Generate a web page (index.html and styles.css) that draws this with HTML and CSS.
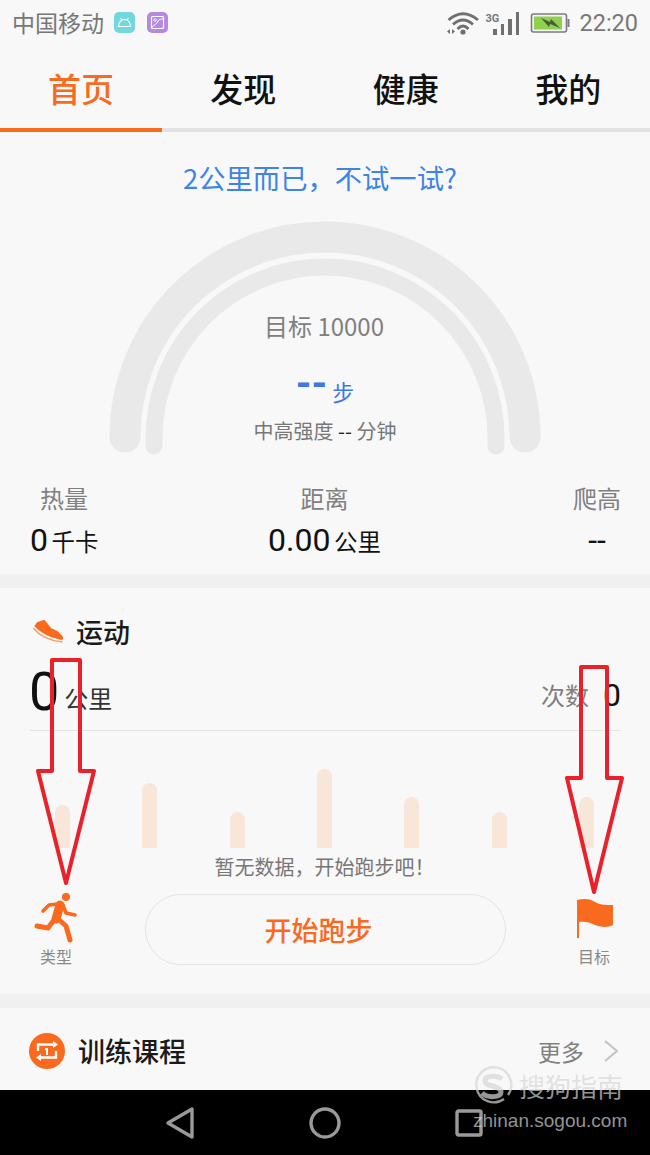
FILE: index.html
```html
<!DOCTYPE html>
<html lang="zh-CN">
<head>
    <meta charset="UTF-8">
    <meta name="viewport" content="width=device-width, initial-scale=1.0">
    <title>运动健康</title>
    <link rel="stylesheet" href="styles.css">
</head>
<body>
<div class="phone">

    <div class="status-bar">
        <div class="status-left">
            <span class="carrier">中国移动</span>
            <svg class="app-icon" viewBox="0 0 21 21">
                <rect width="21" height="21" rx="5" fill="#72d8de"/>
                <path d="M4.5 14.5 C5 10 7.5 7.5 10.5 7.5 C13.5 7.5 16 10 16.5 14.5 Z" fill="none" stroke="#fff" stroke-width="1.2"/>
                <path d="M6.5 6 L8 8 M14.5 6 L13 8" stroke="#fff" stroke-width="1"/>
            </svg>
            <svg class="app-icon" viewBox="0 0 21 21">
                <rect width="21" height="21" rx="5" fill="#b48ae0"/>
                <rect x="4.5" y="4.5" width="12" height="12" rx="1" fill="none" stroke="#fff" stroke-width="1.2"/>
                <path d="M5 15 C7 13 10 12 11 9 C12 7 14 7 16 7" fill="none" stroke="#fff" stroke-width="1"/>
                <circle cx="8" cy="8" r="1.3" fill="none" stroke="#fff" stroke-width="0.8"/>
            </svg>
        </div>
        <div class="status-right">
            <svg class="wifi" width="33" height="24" viewBox="0 0 33 24">
                <g fill="none" stroke="#707070" stroke-width="2.8">
                    <path d="M2.5 9 Q17 -3.5 32 9"/>
                    <path d="M7 13.5 Q17 4.5 27 13.5"/>
                    <path d="M11.5 18 Q17 12 22.5 18"/>
                </g>
                <circle cx="17" cy="21" r="2.6" fill="#707070"/>
                <path d="M4 18 L1 20.5 L4 23 Z M6 18 L9 20.5 L6 23 Z" fill="#707070"/>
            </svg>
            <span class="net-type">3G</span>
            <div class="signal">
                <span class="sig-1"></span>
                <span class="sig-2"></span>
                <span class="sig-3"></span>
                <span class="sig-4"></span>
            </div>
            <svg class="battery" width="41" height="20" viewBox="0 0 41 20">
                <rect x="1.5" y="1" width="35" height="18" rx="2" fill="#f4f4f4" stroke="#7c7c7c" stroke-width="1.6"/>
                <rect x="4" y="3.5" width="28" height="13" fill="#8fd14f"/>
                <rect x="37.5" y="6" width="2" height="8" fill="#7c7c7c"/>
                <path d="M11 5 L20 9 L21 6 L30 15 L20 11 L19 14 Z" fill="#4a5a3a"/>
            </svg>
            <span class="clock">22:20</span>
        </div>
    </div>

    <div class="tabs">
        <a class="tab tab-active">首页</a>
        <a class="tab">发现</a>
        <a class="tab">健康</a>
        <a class="tab">我的</a>
    </div>

    <div class="summary">
        <div class="tip">2公里而已，不试一试?</div>
        <div class="gauge">
            <svg class="gauge-arcs" width="450" height="240" viewBox="100 220 450 240">
                <path d="M125 437 A200 200 0 0 1 525 437" fill="none" stroke="#e9e9e9" stroke-width="31" stroke-linecap="round"/>
                <path d="M154 446 V438 A171 171 0 0 1 496 438 V446" fill="none" stroke="#e9e9e9" stroke-width="17" stroke-linecap="round"/>
            </svg>
            <div class="gauge-goal">目标 10000</div>
            <div class="gauge-steps"><span class="steps-val">--</span><span class="steps-unit">步</span></div>
            <div class="gauge-intensity">中高强度 <span class="dark">--</span> 分钟</div>
        </div>
        <div class="stats">
            <div class="stat">
                <div class="stat-label">热量</div>
                <div class="stat-value"><span class="num">0</span> <span class="unit">千卡</span></div>
            </div>
            <div class="stat stat-mid">
                <div class="stat-label">距离</div>
                <div class="stat-value"><span class="num">0.00</span> <span class="unit">公里</span></div>
            </div>
            <div class="stat stat-right">
                <div class="stat-label">爬高</div>
                <div class="stat-value"><span class="num">--</span></div>
            </div>
        </div>
    </div>

    <div class="band"></div>

    <div class="sport">
        <div class="sport-title">
            <svg class="shoe" width="32" height="26" viewBox="93 55 96 78">
                <path d="M100 80 L108 68 L130 60 L140 72 L150 85 L170 95 L185 110 C188 118 186 122 178 120 L150 112 C130 105 115 95 100 80 Z" fill="#f96a1f"/>
                <path d="M97 86 C115 108 140 123 185 127" fill="none" stroke="#f9a070" stroke-width="5"/>
            </svg>
            <span>运动</span>
        </div>
        <div class="sport-nums">
            <div><span class="big-num">0</span><span class="big-unit">公里</span></div>
            <div><span class="count-label">次数</span><span class="big-num count-num">0</span></div>
        </div>
        <div class="bars">
            <span class="bar" style="height: 43px"></span>
            <span class="bar" style="height: 65px"></span>
            <span class="bar" style="height: 36px"></span>
            <span class="bar" style="height: 79px"></span>
            <span class="bar" style="height: 51px"></span>
            <span class="bar" style="height: 36px"></span>
            <span class="bar" style="height: 51px"></span>
        </div>
        <div class="no-data">暂无数据，开始跑步吧！</div>
        <div class="actions">
            <div class="side-btn">
                <svg class="runner" width="52" height="52" viewBox="30 892 52 52">
                    <circle cx="66" cy="897" r="4" fill="#f96a1f"/>
                    <g fill="none" stroke="#f96a1f" stroke-linecap="round" stroke-linejoin="round">
                        <path d="M60 905 L56 919" stroke-width="9"/>
                        <path d="M57 918 L66 926 L70 940" stroke-width="5"/>
                        <path d="M54 920 L48 928 L37 926" stroke-width="5"/>
                        <path d="M58 904 L49 905 L43 911" stroke-width="3.6"/>
                        <path d="M63 905 L66 913 L75 915" stroke-width="3.6"/>
                    </g>
                </svg>
                <div class="side-label">类型</div>
            </div>
            <div class="start-btn">开始跑步</div>
            <div class="side-btn">
                <svg class="flag" width="52" height="52" viewBox="568 892 52 52">
                    <path d="M577 900 C585 898 591 899 595 902 C600 905 606 905 613 905 V925 C608 928 600 927 595 925 C590 922 584 921 579 922 V938 H577 Z" fill="#f96a1f"/>
                </svg>
                <div class="side-label">目标</div>
            </div>
        </div>
    </div>

    <div class="band"></div>

    <div class="course">
        <div class="course-title">
            <svg class="course-icon" width="36" height="36" viewBox="0 0 36 36">
                <circle cx="18" cy="18" r="18" fill="#f96a1f"/>
                <g fill="none" stroke="#fff" stroke-width="2.4">
                    <path d="M9 18 V11.5 H25"/>
                    <path d="M27 18 V24.5 H11"/>
                </g>
                <path d="M24 8 L29 11.5 L24 15 Z M12 21 L7 24.5 L12 28 Z" fill="#fff"/>
                <path d="M16 15 H19 V22 H17 V17 H16 Z" fill="#fff"/>
            </svg>
            <span>训练课程</span>
        </div>
        <div class="course-more">
            <span>更多</span>
            <svg class="chevron" width="14" height="22" viewBox="0 0 14 22">
                <path d="M1 1 L13 11 L1 21" fill="none" stroke="#c4c4c4" stroke-width="2.2"/>
            </svg>
        </div>
    </div>

    <div class="nav-bar">
        <svg width="30" height="34" viewBox="0 0 30 34">
            <path d="M27 3 V31 L3 17 Z" fill="none" stroke="#9a9a9a" stroke-width="3.4" stroke-linejoin="round"/>
        </svg>
        <svg width="32" height="32" viewBox="0 0 32 32">
            <circle cx="16" cy="16" r="14" fill="none" stroke="#9a9a9a" stroke-width="3.4"/>
        </svg>
        <svg width="28" height="28" viewBox="0 0 28 28">
            <rect x="2" y="2" width="24" height="24" rx="1.5" fill="none" stroke="#9a9a9a" stroke-width="3.4"/>
        </svg>
    </div>

    <!-- red arrows drawn over the screenshot -->
    <svg class="arrows" width="650" height="1155" viewBox="0 0 650 1155">
        <path d="M52 660 H80 V771 H94 L66 883 L38 771 H52 Z" fill="none" stroke="#e8212b" stroke-width="4" stroke-linejoin="round"/>
        <path d="M581 667 H607 V778 H622 L594 892 L567 778 H581 Z" fill="none" stroke="#e8212b" stroke-width="4" stroke-linejoin="round"/>
    </svg>

    <!-- watermark -->
    <div class="watermark">
        <div class="wm-top">
            <svg width="40" height="40" viewBox="0 0 40 40">
                <path d="M31 33 A17.5 17.5 0 1 1 35 29" fill="none" stroke="currentColor" stroke-width="2.4"/>
                <path d="M29 13 C25 9 12 9 12 15 C12 21 28 19 28 26 C28 32 14 32 9 27" fill="none" stroke="currentColor" stroke-width="5"/>
            </svg>
            <span class="wm-name">搜狗指南</span>
        </div>
        <div class="wm-url">zhinan.sogou.com</div>
    </div>

</div>
</body>
</html>
```

FILE: styles.css
```css
* {
    box-sizing: border-box;
}

body {
    margin: 0;
    background-color: #f8f8f8;
    font-family: 'Noto Sans CJK SC', sans-serif;
}

svg {
    display: block;
}

.phone {
    position: relative;
    width: 650px;
    height: 1155px;
    display: flex;
    flex-direction: column;
    overflow: hidden;
    background-color: #f8f8f8;
}

/* Status bar */
.status-bar {
    height: 48px;
    flex: none;
    display: flex;
    justify-content: space-between;
    align-items: center;
    padding: 0 12px 2px 12px;
    color: #777;
}

.status-left,
.status-right {
    display: flex;
    align-items: center;
}

.status-left {
    margin-bottom: 2px;
}

.carrier {
    font-size: 23px;
    margin-right: 10px;
}

.app-icon {
    width: 21px;
    height: 21px;
    margin-right: 12px;
}

.wifi {
    margin-right: 6px;
}

.net-type {
    font-family: 'Roboto', sans-serif;
    font-size: 11px;
    font-weight: bold;
    align-self: flex-start;
    margin-top: 3px;
    width: 15px;
    margin-right: -7px;
}

.signal {
    display: flex;
    align-items: flex-end;
    gap: 4px;
    height: 23px;
    margin-right: 11px;
}

.signal span {
    width: 3.5px;
    background-color: #707070;
}

.sig-1 { height: 6px; }
.sig-2 { height: 11px; }
.sig-3 { height: 16px; }
.sig-4 { height: 23px; }

.battery {
    margin-right: 8px;
}

.clock {
    font-family: 'Roboto', sans-serif;
    font-size: 23.5px;
}

/* Tabs */
.tabs {
    height: 84px;
    flex: none;
    display: flex;
    border-bottom: 4px solid #e2e2e2;
}

.tab {
    width: 162.5px;
    height: 84px;
    padding-bottom: 4px;
    display: flex;
    justify-content: center;
    align-items: center;
    font-size: 33px;
    font-weight: 500;
    color: #111;
}

.tab-active {
    width: 162px;
    padding-bottom: 0;
    color: #f96a1f;
    border-bottom: 4px solid #f96a1f;
}

/* Summary with the gauge */
.summary {
    height: 442px;
    flex: none;
    display: flex;
    flex-direction: column;
}

.tip {
    margin-top: 25px;
    height: 42px;
    line-height: 40px;
    padding-right: 10px;
    text-align: center;
    font-size: 27.3px;
    color: #3d84e6;
}

.gauge {
    position: relative;
    height: 279px;
    padding-top: 109px;
    display: flex;
    flex-direction: column;
    align-items: center;
}

.gauge-arcs {
    position: absolute;
    left: 100px;
    top: 21px;
}

.gauge-goal {
    position: relative;
    height: 36px;
    line-height: 36px;
    padding-right: 2px;
    font-size: 24px;
    color: #808080;
}

.gauge-steps {
    position: relative;
    margin-top: 20px;
    height: 40px;
    line-height: 40px;
    color: #3d78e6;
}

.steps-val {
    font-family: 'Roboto', sans-serif;
    font-size: 40px;
    font-weight: bold;
}

.steps-unit {
    position: relative;
    top: 4px;
    font-size: 22px;
    margin-left: 5px;
}

.gauge-intensity {
    position: relative;
    margin-top: 12px;
    height: 30px;
    line-height: 30px;
    font-size: 20px;
    color: #777;
}

.dark {
    color: #222;
}

.stats {
    display: grid;
    grid-template-columns: 1fr 240px 1fr;
    padding: 2px 29px 0 30px;
}

.stat-mid {
    padding-right: 2px;
    text-align: center;
}

.stat-right {
    width: 48px;
    justify-self: end;
    text-align: center;
    white-space: nowrap;
}

.stat-label {
    height: 36px;
    line-height: 36px;
    font-size: 24px;
    color: #808080;
    padding-left: 10px;
}

.stat-mid .stat-label,
.stat-right .stat-label {
    padding-left: 0;
}

.stat-value {
    margin-top: 2px;
    height: 44px;
    line-height: 44px;
    color: #111;
}

.num {
    font-family: 'Roboto', sans-serif;
    font-size: 32px;
}

.unit {
    font-size: 23.5px;
}

.band {
    height: 14px;
    flex: none;
    background-color: #f0f0f0;
}

/* Sport card */
.sport {
    height: 406px;
    flex: none;
    padding: 0 29px 0 30px;
    display: flex;
    flex-direction: column;
}

.sport-title {
    margin-top: 24px;
    height: 38px;
    display: flex;
    align-items: center;
    gap: 12px;
    padding-left: 2px;
    font-size: 27px;
    font-weight: 500;
    color: #1a1a1a;
}

.sport-nums {
    height: 81px;
    padding-top: 3px;
    display: flex;
    justify-content: space-between;
    align-items: center;
    border-bottom: 1px solid #e4e4e4;
}

.sport-nums > div {
    display: flex;
    align-items: center;
}

.big-num {
    font-family: 'Roboto', sans-serif;
    font-size: 54px;
    font-weight: 400;
    line-height: 60px;
    margin-left: -1px;
    color: #111;
}

.big-unit {
    font-size: 24px;
    color: #333;
    margin: 12px 0 0 5px;
}

.count-label {
    font-size: 24px;
    color: #808080;
    margin-top: 6px;
}

.count-num {
    margin-left: 14px;
    margin-top: 7px;
    font-size: 32px;
}

.bars {
    height: 117px;
    padding: 0 27px 0 25px;
    display: flex;
    justify-content: space-between;
    align-items: flex-end;
}

.bar {
    width: 15px;
    background-color: #f8e6d8;
    border-radius: 7.5px 7.5px 0 0;
}

.no-data {
    height: 38px;
    line-height: 38px;
    text-align: center;
    font-size: 20px;
    color: #777;
    padding-right: 2px;
}

.actions {
    display: flex;
    justify-content: space-between;
    padding-right: 1px;
}

.side-btn {
    width: 52px;
    display: flex;
    flex-direction: column;
    align-items: center;
    margin-top: 6px;
}

.side-label {
    margin-top: 0;
    font-size: 16px;
    line-height: 24px;
    color: #888;
}

.start-btn {
    width: 361px;
    height: 71px;
    margin-top: 8px;
    padding-right: 13px;
    border: 1px solid #e4e4e4;
    border-radius: 36px;
    display: flex;
    justify-content: center;
    align-items: center;
    font-size: 27px;
    font-weight: 500;
    color: #f96a1f;
}

/* Course row */
.course {
    flex: 1;
    padding: 3px 32px 0 29px;
    display: flex;
    justify-content: space-between;
    align-items: center;
}

.course-title {
    display: flex;
    align-items: center;
    gap: 13px;
    font-size: 27px;
    font-weight: 500;
    color: #1a1a1a;
}

.course-more {
    display: flex;
    align-items: center;
    gap: 20px;
    font-size: 23px;
    color: #808080;
}

/* Navigation bar */
.nav-bar {
    height: 65px;
    flex: none;
    background-color: #000;
    padding: 0 167px 0 165px;
    display: flex;
    justify-content: space-between;
    align-items: center;
}

.arrows {
    position: absolute;
    left: 0;
    top: 0;
    pointer-events: none;
}

.watermark {
    position: absolute;
    left: 473px;
    top: 1066px;
    width: 170px;
    color: rgba(214, 214, 214, 0.7);
}

.wm-top {
    display: flex;
    align-items: center;
    gap: 6px;
}

.wm-name {
    font-size: 26px;
    line-height: 40px;
    white-space: nowrap;
}

.wm-url {
    margin-top: 4px;
    font-family: 'Liberation Sans', sans-serif;
    font-size: 19px;
    line-height: 22px;
    white-space: nowrap;
}
```
